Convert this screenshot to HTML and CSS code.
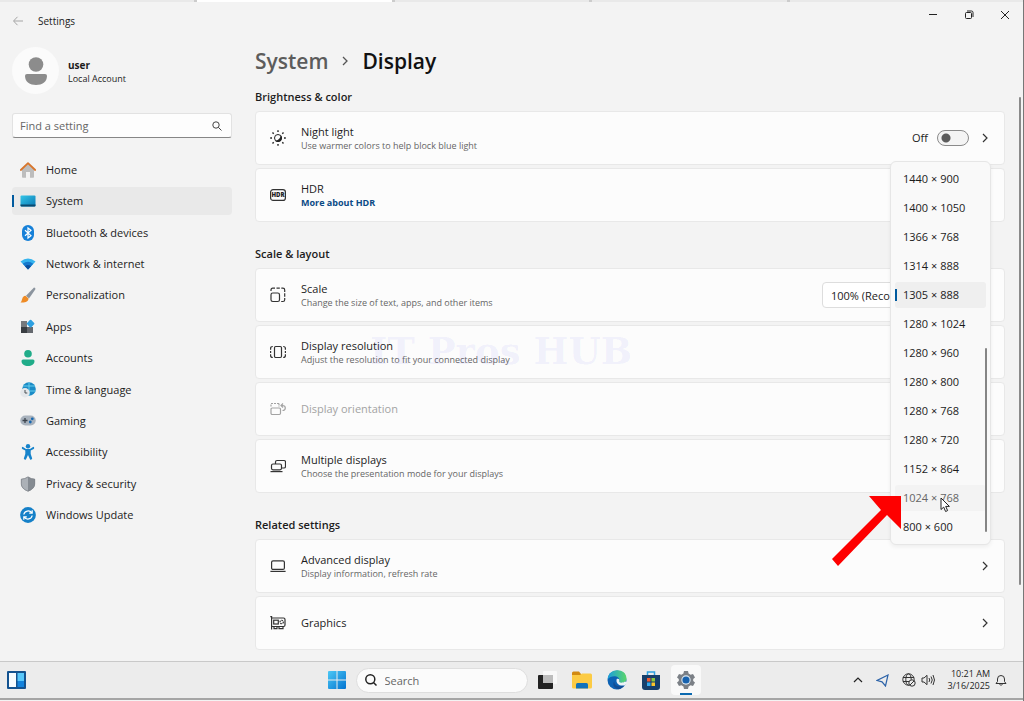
FILE: index.html
```html
<!DOCTYPE html>
<html lang="en">
<head>
    <meta charset="UTF-8">
    <meta name="viewport" content="width=device-width, initial-scale=1.0">
    <title>Settings</title>
    <link rel="stylesheet" href="styles.css">
</head>
<body>

<div class="tab-strip">
    <span class="tab"></span>
    <span class="tab tab-open"></span>
    <span class="tab"></span>
    <span class="tab"></span>
    <span class="tab"></span>
</div>

<header class="title-bar">
    <button class="icon-button" aria-label="Back">
        <svg width="12" height="12" viewBox="0 0 12 12" fill="none" stroke="#a5a5a5"><path d="M11 6H2M5.500 1.800L1.500 6l4 4.200"/></svg>
    </button>
    <span class="app-name">Settings</span>
    <div class="window-buttons">
        <button class="icon-button" aria-label="Minimize"><svg width="10" height="10" viewBox="0 0 10 10" stroke="#222"><path d="M1 4.500h8"/></svg></button>
        <button class="icon-button" aria-label="Restore"><svg width="10" height="10" viewBox="0 0 10 10" fill="none" stroke="#222"><rect x="1.500" y="2.500" width="6" height="6" rx="1"/><path d="M3 1h4.500Q9 1 9 2.500V7"/></svg></button>
        <button class="icon-button" aria-label="Close"><svg width="10" height="10" viewBox="0 0 10 10" stroke="#222"><path d="M1 1l8 8M9 1l-8 8"/></svg></button>
    </div>
</header>

<div class="window">
    <aside class="sidebar">
        <div class="profile">
            <span class="avatar">
                <svg width="24" height="28" viewBox="0 0 24 28" fill="#8c8c8c"><circle cx="12" cy="7.500" r="7.300"/><path d="M3 17h18q2 0 2 2c0 6-5 9-11 9S1 25 1 19q0-2 2-2z"/></svg>
            </span>
            <div class="profile-text">
                <strong>user</strong>
                <span>Local Account</span>
            </div>
        </div>

        <div class="search-box">
            <input type="text" placeholder="Find a setting" aria-label="Find a setting">
            <svg width="10" height="10" viewBox="0 0 10 10" fill="none" stroke="#444"><circle cx="4" cy="4" r="3.200"/><path d="M6.300 6.300L9.500 9.500"/></svg>
        </div>

        <nav class="nav">
            <a href="#" class="nav-item">
                <svg width="16" height="16" viewBox="0 0 16 16"><path d="M2 7l6-5.500L14 7v8q0 .8-.8.800H10V10H6v5.800H2.800Q2 15.800 2 15z" fill="#bdbdbd"/><path d="M.8 8L8 1.200 15.200 8" fill="none" stroke="#d8752b" stroke-width="1.800" stroke-linecap="round" stroke-linejoin="round"/></svg>
                Home
            </a>
            <a href="#" class="nav-item selected">
                <svg width="16" height="16" viewBox="0 0 16 16"><defs><linearGradient id="screen" x1="0" y1="0" x2="1" y2="1"><stop offset="0" stop-color="#35c6e8"/><stop offset="1" stop-color="#0a78b4"/></linearGradient></defs><rect x=".5" y="2.500" width="15" height="11" rx="1" fill="url(#screen)"/><path d="M.5 11.500h15v1q0 1-1 1h-13q-1 0-1-1z" fill="#0b4a70"/></svg>
                System
            </a>
            <a href="#" class="nav-item">
                <svg width="16" height="16" viewBox="0 0 16 16"><rect x="2" y="0" width="12" height="16" rx="6" fill="#1680d8"/><path d="M5 5.200l6 5.400L8 13V3l3 2.400L5 10.800" fill="none" stroke="#fff" stroke-width="1.200"/></svg>
                Bluetooth &amp; devices
            </a>
            <a href="#" class="nav-item">
                <svg width="16" height="16" viewBox="0 0 16 16"><path d="M.5 5.500Q8-.5 15.500 5.500L8 13.500z" fill="#35b4ee"/><path d="M2.700 7.800Q8 3.500 13.300 7.800L8 13.500z" fill="#1478cc"/><path d="M5 10.200Q8 7.800 11 10.200L8 13.500z" fill="#0c4e9c"/></svg>
                Network &amp; internet
            </a>
            <a href="#" class="nav-item">
                <svg width="16" height="16" viewBox="0 0 16 16"><path d="M14 .6q2 .2 1.200 2L9 11.500 6 8.700z" fill="#8b949e"/><path d="M5.500 8.700l3 2.800c0 3-3.500 4.500-8 3.900C2.500 14.300 1.500 8.800 5.500 8.700z" fill="#ee8b25"/></svg>
                Personalization
            </a>
            <a href="#" class="nav-item">
                <svg width="16" height="16" viewBox="0 0 16 16"><path d="M1 2h6v6H1z" fill="#76797d"/><path d="M1 8h6v6H1z" fill="#393d42"/><path d="M7 8h6v6H7z" fill="#64686e"/><rect x="7.600" y="1.600" width="6" height="6" rx="1" fill="#2c9fe0" transform="rotate(45 10.600 4.600)"/></svg>
                Apps
            </a>
            <a href="#" class="nav-item">
                <svg width="16" height="16" viewBox="0 0 16 16" fill="#20ac89"><circle cx="8" cy="3.800" r="3.800"/><path d="M3 9.500h10q1.500 0 1.500 1.500c0 3.500-3 5-6.500 5s-6.500-1.500-6.500-5Q1.500 9.500 3 9.500z"/></svg>
                Accounts
            </a>
            <a href="#" class="nav-item">
                <svg width="16" height="16" viewBox="0 0 16 16"><circle cx="9" cy="7" r="6.800" fill="#1b8bc6"/><path d="M9 .5v13M3 4h12M3 9h12.500" stroke="#65cdec" fill="none"/><circle cx="5" cy="10.700" r="4.700" fill="#e4e7ea"/><path d="M5 8v3h2.300" fill="none" stroke="#4a5055"/></svg>
                Time &amp; language
            </a>
            <a href="#" class="nav-item">
                <svg width="16" height="16" viewBox="0 0 16 16"><rect x=".3" y="2.500" width="15.400" height="10" rx="5" fill="#a8b2bd"/><path d="M5 5v5M2.500 7.500h5" stroke="#3b434c" stroke-width="1.300"/><circle cx="12.300" cy="5.800" r="1.400" fill="#1667b0"/><circle cx="10.300" cy="9" r="1.400" fill="#1667b0"/></svg>
                Gaming
            </a>
            <a href="#" class="nav-item">
                <svg width="16" height="16" viewBox="0 0 16 16" fill="#1683cb"><circle cx="8" cy="2.200" r="2.200"/><path d="M2.600 2.800Q1.200 3.800 2.300 4.900L5.300 6.600V10L3.800 14.600Q4.400 16.200 5.900 15.400L8 11l2.100 4.400q1.500.8 2.100-.8L10.700 10V6.600l3-1.700q1.100-1.100-.3-2.100L10 5H6z"/></svg>
                Accessibility
            </a>
            <a href="#" class="nav-item">
                <svg width="16" height="16" viewBox="0 0 16 16"><path d="M8 .7Q11 3 15 3v4.500c0 4-3 6.500-7 8z" fill="#858b92"/><path d="M8 .7Q5 3 1 3v4.500c0 4 3 6.500 7 8z" fill="#acb1b7"/><path d="M8 .9Q11 3 14.700 3.200v4.300c0 3.800-2.800 6.200-6.700 7.600-3.900-1.400-6.700-3.800-6.700-7.600V3.200Q5 3 8 .9z" fill="none" stroke="#7d8389" stroke-width=".8"/></svg>
                Privacy &amp; security
            </a>
            <a href="#" class="nav-item">
                <svg width="16" height="16" viewBox="0 0 16 16"><circle cx="8" cy="8" r="7.900" fill="#1580c8"/><path d="M3.800 7.500C4.500 3.600 9.600 2.700 12 6M12.200 3.200V6.200H9.200M12.200 8.500C11.500 12.400 6.400 13.300 4 10M3.800 12.800V9.800H6.800" fill="none" stroke="#fff" stroke-width="1.200"/></svg>
                Windows Update
            </a>
        </nav>
    </aside>

    <main class="content">
        <h1 class="breadcrumb">
            <a href="#">System</a>
            <svg width="8" height="12" viewBox="0 0 8 12" fill="none" stroke="#555" stroke-width="1.300"><path d="M2 2l4 4-4 4"/></svg>
            <span>Display</span>
        </h1>

        <section class="group">
            <h2>Brightness &amp; color</h2>
            <div class="card">
                <svg width="16" height="16" viewBox="0 0 16 16"><circle cx="8" cy="8" r="3.500" fill="none" stroke="#222"/><path d="M10.800 5.200A4 4 0 1 1 5 10.700C8 10.700 10.500 8 10.800 5.200z" fill="#222"/><path d="M8 .2V2M8 14v1.800M.2 8H2M14 8h1.800M2.500 2.500l1.200 1.200M12.300 12.300l1.200 1.200M2.500 13.500l1.200-1.200M12.300 3.700l1.200-1.200" stroke="#222" stroke-width="1.400"/></svg>
                <div class="card-text">
                    <label for="nightLight">Night light</label>
                    <small>Use warmer colors to help block blue light</small>
                </div>
                <span class="toggle-state">Off</span>
                <input type="checkbox" id="nightLight" class="toggle">
                <svg class="chevron" width="8" height="12" viewBox="0 0 8 12"><path d="M2 2l4 4-4 4"/></svg>
            </div>
            <div class="card">
                <svg width="16" height="16" viewBox="0 0 16 16"><rect x=".6" y="2.600" width="14.800" height="10.800" rx="2.500" fill="none" stroke="#333" stroke-width="1.200"/><text x="8" y="10.300" class="hdr-text">HDR</text></svg>
                <div class="card-text">
                    <span>HDR</span>
                    <a href="#">More about HDR</a>
                </div>
            </div>
        </section>

        <section class="group">
            <h2>Scale &amp; layout</h2>
            <div class="card">
                <svg width="16" height="16" viewBox="0 0 16 16" fill="none" stroke="#333" stroke-width="1.200"><rect x="1" y="6" width="8.500" height="8.500" rx="1.800"/><path d="M1 4V3q0-1.800 1.800-1.800H5M6.500 1.200h3.300M11.300 1.200h1.600q1.800 0 1.800 1.800v2M14.700 6.300v3.400M14.700 11v1.700q0 1.800-1.800 1.800h-1.700"/></svg>
                <div class="card-text">
                    <label for="scale">Scale</label>
                    <small>Change the size of text, apps, and other items</small>
                </div>
                <select id="scale" class="scale-select">
                    <option>100% (Recommended)</option>
                </select>
                <svg class="chevron" width="8" height="12" viewBox="0 0 8 12"><path d="M2 2l4 4-4 4"/></svg>
            </div>
            <div class="card">
                <svg width="16" height="16" viewBox="0 0 16 16" fill="none" stroke="#333" stroke-width="1.200"><rect x="4.500" y="2.500" width="7" height="11" rx="1.200"/><path d="M2.800 2.500Q.6 2.500.6 4.500v1.300M.6 7v2M.6 10.200v1.300q0 2 2.200 2M13.200 2.500q2.200 0 2.200 2v1.300M15.400 7v2M15.400 10.200v1.300q0 2-2.200 2"/></svg>
                <div class="card-text">
                    <span id="resolutionLabel">Display resolution</span>
                    <small>Adjust the resolution to fit your connected display</small>
                </div>
                <span class="watermark">IT Pros HUB</span>
                <div class="resolution-menu" role="listbox" aria-labelledby="resolutionLabel">
                    <button role="option">1440 × 900</button>
                    <button role="option">1400 × 1050</button>
                    <button role="option">1366 × 768</button>
                    <button role="option">1314 × 888</button>
                    <button role="option" aria-selected="true" class="current">1305 × 888</button>
                    <button role="option">1280 × 1024</button>
                    <button role="option">1280 × 960</button>
                    <button role="option">1280 × 800</button>
                    <button role="option">1280 × 768</button>
                    <button role="option">1280 × 720</button>
                    <button role="option">1152 × 864</button>
                    <button role="option" class="pressed">1024 × 768</button>
                    <button role="option">800 × 600</button>
                    <span class="menu-thumb"></span>
                    <svg class="pointer" width="11" height="16" viewBox="0 0 11 16"><path d="M1 1v11.500l2.700-2.400 1.900 4.400 2-.9-1.900-4.200h3.700z" fill="#fff" stroke="#222"/></svg>
                    <svg class="red-arrow" width="70" height="70" viewBox="0 0 70 70"><path d="M37 0h32v33L55 19 6 70 0 63 49 14z" fill="#fe0000"/></svg>
                </div>
            </div>
            <div class="card disabled">
                <svg width="16" height="16" viewBox="0 0 16 16" fill="none" stroke="#a3a3a3" stroke-width="1.200"><rect x="1" y="7" width="9.500" height="6.500" rx="1.200"/><path d="M1 5.500V2.800M1 2.500h8M9 2.500v3.500" stroke-dasharray="2 1"/><path d="M11.500 4.500h1q2.800 0 2.800 2.500t-2.800 2.500M13 2.500l-2 2 2 2"/></svg>
                <div class="card-text">
                    <span>Display orientation</span>
                </div>
            </div>
            <div class="card">
                <svg width="16" height="16" viewBox="0 0 16 16" fill="none" stroke="#333" stroke-width="1.200"><path d="M5.500 6V4q0-1.500 1.500-1.500h7q1.500 0 1.500 1.500v4.500q0 1.500-1.500 1.500h-2.500"/><rect x="1.500" y="6" width="10" height="5.800" rx="1.500"/><path d="M.5 13.600h12"/></svg>
                <div class="card-text">
                    <span>Multiple displays</span>
                    <small>Choose the presentation mode for your displays</small>
                </div>
            </div>
        </section>

        <section class="group">
            <h2>Related settings</h2>
            <div class="card">
                <svg width="16" height="16" viewBox="0 0 16 16" fill="none" stroke="#333" stroke-width="1.200"><rect x="1.600" y="2.800" width="12.800" height="8.600" rx="1.500"/><path d="M.4 13.400h15.200"/></svg>
                <div class="card-text">
                    <span>Advanced display</span>
                    <small>Display information, refresh rate</small>
                </div>
                <svg class="chevron" width="8" height="12" viewBox="0 0 8 12"><path d="M2 2l4 4-4 4"/></svg>
            </div>
            <div class="card">
                <svg width="16" height="16" viewBox="0 0 16 16" fill="none" stroke="#333" stroke-width="1.200"><path d="M.3 1.600h1.300v13M2 3h11.500q1.500 0 1.500 1.500V10q0 1.500-1.500 1.500H2"/><rect x="3.700" y="5.200" width="4.600" height="3.800"/><circle cx="11.700" cy="7" r="1.700" stroke-dasharray="1.500 .8"/><path d="M4 11.500v2.200h3v-2.200M9 11.500v2.200h4v-2.200"/></svg>
                <div class="card-text">
                    <span>Graphics</span>
                </div>
                <svg class="chevron" width="8" height="12" viewBox="0 0 8 12"><path d="M2 2l4 4-4 4"/></svg>
            </div>
        </section>
        <span class="page-thumb"></span>
    </main>
</div>

<footer class="taskbar">
    <button class="icon-button" aria-label="Widgets">
        <svg width="19" height="18" viewBox="0 0 19 18"><rect width="19" height="18" rx="1" fill="#13528f"/><path d="M2 2h7v14H2z" fill="#f5fbff"/><path d="M10.500 2H17v8h-6.500z" fill="#57c7fa"/><path d="M10.500 10H17v6h-6.500z" fill="#1382dc"/></svg>
    </button>

    <div class="task-apps">
        <button class="icon-button" aria-label="Start">
            <svg width="18" height="18" viewBox="0 0 18 18"><defs><linearGradient id="start" x1="0" y1="0" x2="1" y2="1"><stop offset="0" stop-color="#4cc8f5"/><stop offset="1" stop-color="#0273d0"/></linearGradient></defs><path d="M0 1q0-1 1-1h7.500v8.500H0zM9.500 0H17q1 0 1 1v7.500H9.500zM0 9.500h8.500V18H1q-1 0-1-1zM9.500 9.500H18V17q0 1-1 1H9.500z" fill="url(#start)"/></svg>
        </button>
        <div class="task-search">
            <svg width="12" height="12" viewBox="0 0 12 12" fill="none" stroke="#222" stroke-width="1.500"><circle cx="5.300" cy="5.300" r="4.500"/><path d="M8.500 8.500l3 3"/></svg>
            <input type="text" placeholder="Search" aria-label="Search">
        </div>
        <button class="icon-button" aria-label="Task view">
            <svg width="19" height="18" viewBox="0 0 19 18"><rect x="5" y="0" width="14" height="13" rx="1" fill="#f8f8f8"/><rect x="0" y="4" width="15" height="14" rx="1" fill="#222"/><path d="M5 4h10v8H5z" fill="#bcbcbc"/></svg>
        </button>
        <button class="icon-button" aria-label="File Explorer">
            <svg width="20" height="18" viewBox="0 0 20 18"><path d="M0 2q0-1.500 1.500-1.500H7L9 3v4H0z" fill="#d28a12"/><path d="M0 4h8l2-1.500h8.500Q20 2.500 20 4v12q0 1.500-1.500 1.500h-17Q0 17.500 0 16z" fill="#fccb44"/><path d="M4 17.500v-4Q4 12 5.500 12h9q1.500 0 1.500 1.500v4z" fill="#1172ba"/></svg>
        </button>
        <button class="icon-button" aria-label="Edge">
            <svg width="20" height="20" viewBox="0 0 20 20"><defs><linearGradient id="edge"><stop offset="0" stop-color="#1b9ede"/><stop offset="1" stop-color="#5bd66a"/></linearGradient></defs><circle cx="10" cy="10" r="9.500" fill="#0d62b4"/><path d="M.6 9.500C1.200-3 19.500-2.500 19.500 8.500c0 3-2.200 4.500-4.700 4.500-2 0-3.300-.8-2.500-2.200C13.500 5.500 4 4.500.6 9.500z" fill="url(#edge)"/><path d="M7.200 11.500c0 3.800 4.300 6.300 10 3.800-1.200 1.800-3 3.300-5.500 3.900-5-.6-6.500-5.200-4.500-7.700z" fill="#124c93"/><path d="M9.700 8.900c2.300-.8 3.100.8 2.500 1.900-.6 1.800 2.600 3 6 .8l1.800.6-1.800 3c-5.500 1.300-9.700-1.500-8.500-6.300z" fill="#edf3f7"/></svg>
        </button>
        <button class="icon-button" aria-label="Store">
            <svg width="18" height="19" viewBox="0 0 18 19"><path d="M5.500 5V1h7v4" fill="none" stroke="#2da0df" stroke-width="1.500"/><path d="M0 4h18v12q0 3-3 3H3q-3 0-3-3z" fill="#173f6b"/><path d="M5 7h3.500v3.500H5z" fill="#f05a32"/><path d="M9.500 7H13v3.500H9.500z" fill="#8cc63f"/><path d="M5 11.500h3.500V15H5z" fill="#31aaf0"/><path d="M9.500 11.500H13V15H9.500z" fill="#fcc52b"/></svg>
        </button>
        <button class="icon-button active-app" aria-label="Settings">
            <svg width="18" height="18" viewBox="0 0 18 18"><path d="M7 0h4l.6 2.500 2 1.200L16 3l2 3.500L16.200 8v2l1.800 1.500L16 15l-2.400-.7-2 1.200L11 18H7l-.6-2.500-2-1.200L2 15 0 11.500 1.800 10V8L0 6.500 2 3l2.400.7 2-1.200z" fill="#7b8086"/><circle cx="9" cy="9" r="4.700" fill="#dce8f2"/><circle cx="9" cy="9" r="3.600" fill="#1762ae"/></svg>
        </button>
    </div>

    <div class="tray">
        <button class="icon-button" aria-label="Hidden icons"><svg width="10" height="8" viewBox="0 0 10 8" fill="none" stroke="#222" stroke-width="1.200"><path d="M1 6l4-4 4 4"/></svg></button>
        <button class="icon-button" aria-label="Location"><svg width="13" height="13" viewBox="0 0 13 13" fill="none" stroke="#2b62a8" stroke-width="1.200"><path d="M12 1L1 6.500l5 1.300L9.500 12z"/></svg></button>
        <button class="icon-button" aria-label="Network"><svg width="14" height="14" viewBox="0 0 14 14" fill="none" stroke="#333"><circle cx="6.500" cy="6.500" r="5.700"/><ellipse cx="6.500" cy="6.500" rx="2.700" ry="5.700"/><path d="M1 4.500h11M1 8.500h11"/><circle cx="10" cy="10" r="3.200" fill="#ececec"/><path d="M8 12l4-4"/></svg></button>
        <button class="icon-button" aria-label="Volume"><svg width="14" height="12" viewBox="0 0 14 12" fill="none" stroke="#333"><path d="M1 4h2l3-2.700v9.400L3 8H1zM8 4q1.500 2 0 4M10 2.500q2.500 3.500 0 7M12 1q3 5 0 10"/></svg></button>
        <div class="clock">
            <span>10:21 AM</span>
            <span>3/16/2025</span>
        </div>
        <button class="icon-button" aria-label="Notifications"><svg width="12" height="13" viewBox="0 0 12 13" fill="none" stroke="#333"><path d="M1 9.500l1.500-2V5a3.500 3.500 0 0 1 7 0v2.500l1.500 2zM4.500 10q1.500 3 3 0"/></svg></button>
    </div>
</footer>

</body>
</html>
```
FILE: styles.css
```css
* {
    box-sizing: border-box;
}

body {
    margin: 0;
    min-height: 100vh;
    display: flex;
    flex-direction: column;
    background-color: #f3f3f3;
    border-right: 1px solid #777;
    color: #1c1c1c;
    font-family: "Open Sans", "Noto Sans", sans-serif;
    font-size: 11px;
    line-height: 14px;
}

button,
input,
select {
    font-family: inherit;
    font-size: inherit;
    color: inherit;
}

a {
    color: inherit;
    text-decoration: none;
}

svg {
    display: block;
    flex-shrink: 0;
}

.icon-button {
    display: flex;
    padding: 0;
    border: 0;
    background: none;
}

/* browser tabs above the window */
.tab-strip {
    display: flex;
    gap: 3px;
    height: 2px;
    background-color: #ccc;
}

.tab {
    flex: 1;
    background-color: #e9e9e9;
}

.tab-open {
    background-color: white;
}

.tab:last-child {
    flex: 1.2;
}

.title-bar {
    display: flex;
    align-items: center;
    height: 38px;
    padding: 0 13px 0 12px;
}

.app-name {
    margin-left: 14px;
    font-size: 10px;
}

.window-buttons {
    display: flex;
    gap: 26px;
    margin-left: auto;
    padding-bottom: 12px;
}

.window {
    flex: 1;
    display: flex;
    gap: 23px;
    padding-left: 12px;
}

/* sidebar */
.sidebar {
    width: 220px;
    flex-shrink: 0;
    padding-top: 7px;
}

.profile {
    display: flex;
    align-items: center;
    gap: 9px;
}

.avatar {
    display: flex;
    align-items: center;
    justify-content: center;
    width: 47px;
    height: 47px;
    border-radius: 50%;
    background-color: #fbfbfb;
}

.profile-text {
    display: flex;
    flex-direction: column;
    padding-top: 2px;
    font-size: 9px;
}

.profile-text strong {
    font-size: 10px;
    font-weight: 700;
}

.search-box {
    display: flex;
    align-items: center;
    margin-top: 19px;
    padding: 0 9px 0 7px;
    height: 25px;
    border: 1px solid #e2e2e2;
    border-bottom-color: #868686;
    border-radius: 3px;
    background-color: #fdfdfd;
}

.search-box input,
.task-search input {
    flex: 1;
    min-width: 0;
    padding: 0;
    border: 0;
    background: none;
}

.search-box input::placeholder,
.task-search input::placeholder {
    color: #666;
}

.nav {
    display: flex;
    flex-direction: column;
    justify-content: space-between;
    height: 373px;
    margin-top: 18px;
}

.nav-item {
    display: flex;
    align-items: center;
    gap: 10px;
    height: 28px;
    padding-left: 8px;
    border-radius: 4px;
}

.nav-item.selected {
    background: linear-gradient(#005a9e, #005a9e) 0 center / 2px 12px no-repeat #e9e9e9;
}

/* settings page */
.content {
    flex: 1;
    position: relative;
    padding-right: 18px;
}

.breadcrumb {
    display: flex;
    align-items: center;
    gap: 13px;
    margin: 6px 0 11px;
    font-size: 21px;
    line-height: 30px;
    font-weight: 600;
    color: #111;
}

.breadcrumb a {
    color: #5c5c5c;
}

.group {
    display: flex;
    flex-direction: column;
    gap: 3px;
    margin-bottom: 22px;
}

.group:last-of-type {
    margin-bottom: 10px;
}

.group h2 {
    margin: 0 0 1px;
    font-size: 11px;
    line-height: 20px;
    font-weight: 600;
}

.card {
    position: relative;
    display: flex;
    align-items: center;
    height: 54px;
    padding: 0 15px 0 14px;
    border: 1px solid #e8e8e8;
    border-radius: 4px;
    background-color: #fcfcfc;
}

.card-text {
    display: flex;
    flex-direction: column;
    align-items: flex-start;
    flex: 1;
    margin-left: 15px;
}

.card-text:has(small, a) {
    padding-top: 2px;
}

.card-text small {
    font-size: 9px;
    color: #666;
}

.card-text a {
    font-size: 9px;
    font-weight: 700;
    color: #0a4a85;
}

.disabled {
    color: #a3a3a3;
}

.chevron {
    fill: none;
    stroke: #333;
    stroke-width: 1.2;
}

.hdr-text {
    font-size: 6px;
    font-weight: 800;
    text-anchor: middle;
    fill: #222;
}

.toggle {
    appearance: none;
    width: 32px;
    height: 16px;
    margin: 0 12px 0 9px;
    border: 1px solid #8a8a8a;
    border-radius: 8px;
    background: radial-gradient(circle at 8px 7px, #5c5c5c 4px, transparent 5px) #f4f4f4;
}

.scale-select {
    appearance: none;
    width: 148px;
    height: 26px;
    margin-right: 11px;
    padding: 0 8px;
    border: 1px solid #ddd;
    border-radius: 4px;
    background-color: white;
}

.watermark {
    position: absolute;
    left: 114px;
    top: 7px;
    font-family: "DejaVu Serif", serif;
    font-size: 37px;
    font-weight: 700;
    line-height: 37px;
    color: rgba(90, 90, 240, 0.07);
}

/* open resolution list */
.resolution-menu {
    position: absolute;
    right: 13px;
    top: -165px;
    z-index: 2;
    display: flex;
    flex-direction: column;
    gap: 3px;
    width: 101px;
    padding: 4px;
    border: 1px solid #e6e6e6;
    border-radius: 6px;
    background-color: #f9f9f9;
    box-shadow: 0 2px 4px rgba(0, 0, 0, 0.06);
}

.resolution-menu button {
    height: 26px;
    padding: 0 8px 2px;
    border: 0;
    border-radius: 3px;
    background: none;
    text-align: left;
}

.resolution-menu .current {
    background: linear-gradient(#005a9e, #005a9e) 0 center / 2px 12px no-repeat #efefef;
}

.resolution-menu .pressed {
    background-color: #f3f3f3;
    color: #666;
}

.menu-thumb {
    position: absolute;
    right: 3px;
    top: 186px;
    bottom: 12px;
    width: 2px;
    border-radius: 1px;
    background-color: #858585;
}

.pointer {
    position: absolute;
    left: 49px;
    bottom: 31px;
}

.red-arrow {
    position: absolute;
    right: 88px;
    bottom: -22px;
}

.page-thumb {
    position: absolute;
    right: 2px;
    top: 57px;
    bottom: 76px;
    width: 2px;
    border-radius: 1px;
    background-color: #8a8a8a;
}

/* taskbar */
.taskbar {
    display: grid;
    grid-template-columns: 1fr auto 1fr;
    align-items: center;
    height: 39px;
    margin-bottom: 1px;
    padding: 0 2px 0 7px;
    border-top: 1px solid #c9c9c9;
    border-bottom: 2px solid #a5a5a5;
    background-color: #ececec;
}

.task-apps {
    display: flex;
    align-items: center;
    gap: 15px;
}

.task-search {
    display: flex;
    align-items: center;
    gap: 8px;
    width: 172px;
    height: 25px;
    margin: 0 -5px;
    padding: 0 8px;
    border: 1px solid #dedede;
    border-radius: 13px;
    background-color: #fbfbfb;
}

.active-app {
    align-items: center;
    justify-content: center;
    width: 30px;
    height: 30px;
    margin-left: -4px;
    border-radius: 4px;
    background: linear-gradient(#0a69b0, #0a69b0) center bottom / 12px 2px no-repeat #f9f9f9;
}

.tray {
    display: flex;
    align-items: center;
    justify-content: flex-end;
    gap: 5px;
    padding-right: 14px;
}

.tray .icon-button:first-child,
.tray .icon-button:nth-child(2) {
    margin-right: 8px;
}

.clock {
    display: flex;
    flex-direction: column;
    margin-left: 7px;
    font-size: 9px;
    line-height: 12px;
    text-align: right;
}
```
